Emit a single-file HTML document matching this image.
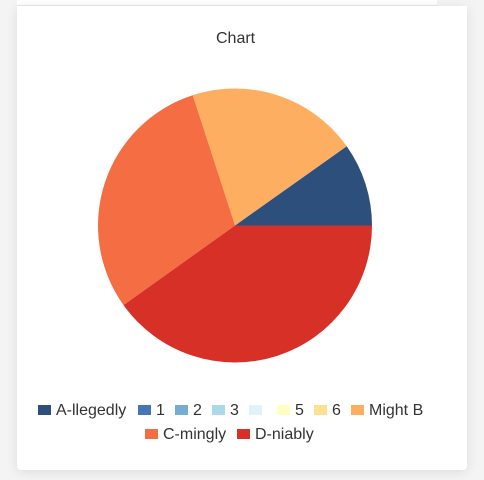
<!DOCTYPE html>
<html><head><meta charset="utf-8"><style>
body{margin:0;width:484px;height:480px;background:#f4f4f4;position:relative;overflow:hidden;font-family:"Liberation Sans",sans-serif;color:#333}
.top{position:absolute;left:17px;top:0;width:420px;height:5px;background:#fff;border-bottom:1px solid #e8e8e8}
.card{position:absolute;left:17px;top:6px;width:450px;height:464px;background:#fff;border-radius:0 0 4px 4px;box-shadow:0 2px 12px rgba(0,0,0,.1)}
.t{position:absolute;font-size:16px;line-height:16px;white-space:nowrap}
.s{position:absolute;width:13px;height:10px}
</style></head><body>
<div class="top"></div>
<div class="card"></div>
<div class="t" style="left:216px;top:31px">Chart</div>
<svg style="position:absolute;left:0;top:0" width="484" height="480">
<path d="M235,225.5 L372,225.5 A137,137 0 0 0 346.7,146.2 Z" fill="#2c4f7c"/>
<path d="M235,225.5 L346.7,146.2 A137,137 0 0 0 192.7,95.2 Z" fill="#fdae61"/>
<path d="M235,225.5 L192.7,95.2 A137,137 0 0 0 123.5,305.1 Z" fill="#f46d43"/>
<path d="M235,225.5 L123.5,305.1 A137,137 0 0 0 372,225.5 Z" fill="#d73027"/>
</svg>
<div class="s" style="left:38px;top:405px;background:#2c4f7c"></div><div class="t" style="left:56px;top:403px">A-llegedly</div>
<div class="s" style="left:138px;top:405px;background:#4575b4"></div><div class="t" style="left:156px;top:403px">1</div>
<div class="s" style="left:175px;top:405px;background:#74add1"></div><div class="t" style="left:193px;top:403px">2</div>
<div class="s" style="left:212px;top:405px;background:#abd9e9"></div><div class="t" style="left:230px;top:403px">3</div>
<div class="s" style="left:249px;top:405px;background:#e0f3f8"></div>
<div class="s" style="left:277px;top:405px;background:#ffffbf"></div><div class="t" style="left:295px;top:403px">5</div>
<div class="s" style="left:314px;top:405px;background:#fee090"></div><div class="t" style="left:332px;top:403px">6</div>
<div class="s" style="left:351px;top:405px;background:#fdae61"></div><div class="t" style="left:369px;top:403px">Might B</div>
<div class="s" style="left:145px;top:429px;background:#f46d43"></div><div class="t" style="left:163px;top:427px">C-mingly</div>
<div class="s" style="left:237px;top:429px;background:#d73027"></div><div class="t" style="left:255px;top:427px">D-niably</div>
</body></html>
